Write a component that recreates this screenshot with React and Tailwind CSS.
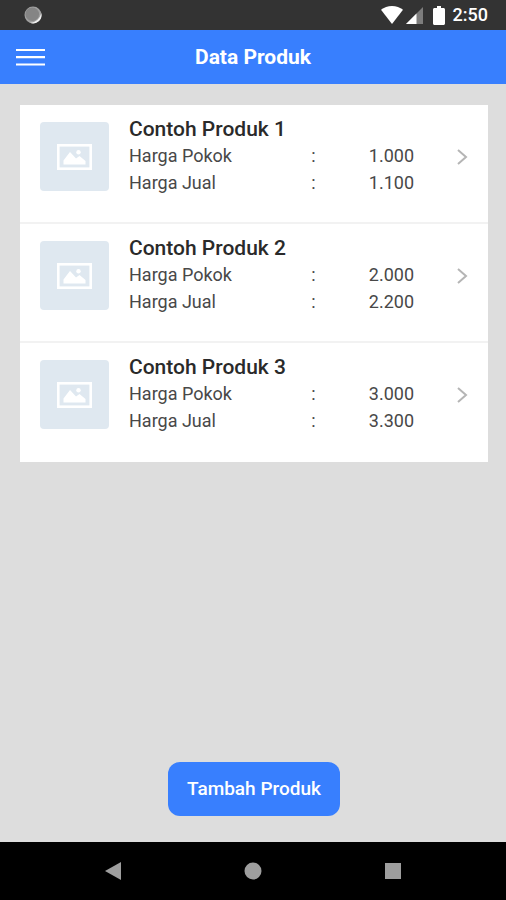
import { useState } from 'react';

const initialProducts = [
  { id: 1, name: 'Contoh Produk 1', hargaPokok: 1000, hargaJual: 1100 },
  { id: 2, name: 'Contoh Produk 2', hargaPokok: 2000, hargaJual: 2200 },
  { id: 3, name: 'Contoh Produk 3', hargaPokok: 3000, hargaJual: 3300 },
];

const formatHarga = (value) => value.toLocaleString('id-ID');

function StatusBar() {
  return (
    <div className="flex h-[30px] items-center justify-between bg-[#333333] pr-[18px] pl-6 text-white">
      <svg width="18" height="18" viewBox="0 0 18 18">
        <circle cx="9" cy="9" r="8.5" fill="#a0a0a0" />
        <path d="M17.3 7a8.5 8.5 0 0 1-12 9.6c6 .4 10.5-3.6 12-9.6z" fill="#f0f0f0" />
        <circle cx="8.3" cy="8.3" r="6.8" fill="#858585" />
      </svg>
      <div className="flex items-center">
        <svg width="22" height="18" viewBox="0 0 22 18" fill="currentColor">
          <path d="M0 3.8C3 1.3 6.800 0 11 0s8 1.3 11 3.800L11 18z" />
        </svg>
        <svg className="ml-[3px]" width="17" height="17" viewBox="0 0 17 17" fill="currentColor">
          <path d="M17 0v17H0z" fill="#7d7d7d" />
          <path d="M10.500 6.500V17H0z" />
        </svg>
        <svg className="ml-[10px]" width="12" height="19" viewBox="0 0 12 19" fill="currentColor">
          <path d="M4 0h4v2h2.5c.8 0 1.5.7 1.5 1.5v14c0 .8-.7 1.5-1.5 1.5h-9C.7 19 0 18.300 0 17.500v-14C0 2.700.7 2 1.500 2H4z" />
        </svg>
        <span className="ml-2 text-[18px] leading-6 font-medium">2:50</span>
      </div>
    </div>
  );
}

function Header() {
  return (
    <header className="grid h-[54px] grid-cols-[1fr_auto_1fr] items-center bg-[#387ffe] px-4 text-white">
      <button type="button" aria-label="Menu" className="w-[29px]">
        <svg width="29" height="18" viewBox="0 0 29 18" stroke="currentColor" strokeWidth="2.2">
          <path d="M0 2h29M0 9.200h29M0 16.500h29" />
        </svg>
      </button>
      <h1 className="text-[21px] leading-[26px] font-bold">Data Produk</h1>
    </header>
  );
}

function Thumbnail() {
  return (
    <div className="mt-[17px] flex h-[69px] w-[69px] shrink-0 items-center justify-center rounded-[4px] bg-[#dfe8f0]">
      <svg width="35" height="26" viewBox="0 0 35 26">
        <rect x="1.3" y="1.3" width="32.4" height="23.4" fill="none" stroke="#fff" strokeWidth="2.6" />
        <path d="M6.500 20.500v-4l6.500-8.500 6 6.500 3.500-2.500 6 5v3.500z" fill="#fff" />
        <circle cx="21.500" cy="8.300" r="2.200" fill="#fff" />
      </svg>
    </div>
  );
}

function PriceRow({ label, value }) {
  return (
    <div className="flex">
      <dt className="flex-1">{label}</dt>
      <span className="w-[5px] text-center">:</span>
      <dd className="w-[98px] text-right">{formatHarga(value)}</dd>
    </div>
  );
}

function ProductItem({ product }) {
  return (
    <li className="border-b-2 border-[#f2f2f2] last:border-white">
      <a href="#" className="flex h-[117px] items-start px-5">
        <Thumbnail />
        <div className="ml-5 flex-1 pt-[11px] text-[#484848]">
          <h2 className="text-[21px] leading-[26px] font-medium text-[#2a2a2a]">{product.name}</h2>
          <dl className="text-[18px] leading-[27px]">
            <PriceRow label="Harga Pokok" value={product.hargaPokok} />
            <PriceRow label="Harga Jual" value={product.hargaJual} />
          </dl>
        </div>
        <svg
          className="mt-11 ml-[42px]"
          width="12"
          height="16"
          viewBox="0 0 12 16"
          fill="none"
          stroke="#b5b5b5"
          strokeWidth="2"
        >
          <path d="M2 1l8 7-8 7" />
        </svg>
      </a>
    </li>
  );
}

function NavigationBar() {
  return (
    <nav className="flex h-[58px] items-center justify-center gap-[122px] bg-black text-[#9e9e9e]">
      <button type="button" aria-label="Kembali">
        <svg width="18" height="18" viewBox="0 0 18 18" fill="currentColor">
          <path d="M17 0v18L1 9z" />
        </svg>
      </button>
      <button type="button" aria-label="Beranda">
        <svg width="18" height="18" viewBox="0 0 18 18" fill="currentColor">
          <circle cx="9" cy="9" r="8.5" />
        </svg>
      </button>
      <button type="button" aria-label="Aplikasi terbaru">
        <svg width="18" height="18" viewBox="0 0 18 18" fill="currentColor">
          <rect x="1" y="1" width="16" height="16" />
        </svg>
      </button>
    </nav>
  );
}

export default function App() {
  const [products, setProducts] = useState(initialProducts);

  const handleAdd = () => {
    const id = products.length + 1;
    setProducts([
      ...products,
      { id, name: `Contoh Produk ${id}`, hargaPokok: id * 1000, hargaJual: id * 1100 },
    ]);
  };

  return (
    <div className="flex min-h-screen flex-col bg-[#dddddd] font-[Roboto,sans-serif]">
      <StatusBar />
      <Header />
      <main className="flex flex-1 flex-col pt-[21px] pr-[18px] pb-[26px] pl-5">
        <ul className="bg-white">
          {products.map((product) => (
            <ProductItem key={product.id} product={product} />
          ))}
        </ul>
        <button
          type="button"
          onClick={handleAdd}
          className="mt-auto h-[54px] self-center rounded-xl bg-[#387ffe] px-[19px] text-[19px] leading-6 font-medium text-white"
        >
          Tambah Produk
        </button>
      </main>
      <NavigationBar />
    </div>
  );
}
